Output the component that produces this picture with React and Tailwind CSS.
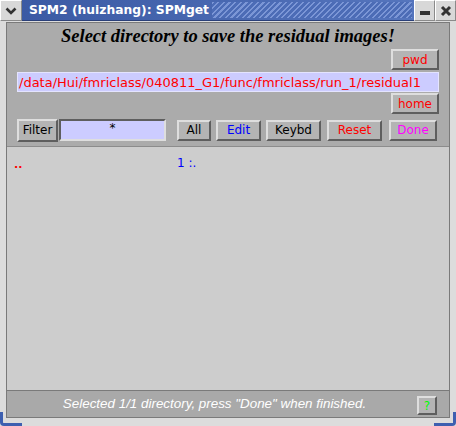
import React from "react";

const sans = { fontFamily: '"DejaVu Sans", "Liberation Sans", sans-serif' };

function Btn({ children, color = "text-black", className = "" }) {
  return (
    <div
      className={`flex items-center justify-center bg-[#b4b4b4] border-2 border-t-[#dedede] border-l-[#dedede] border-b-[#5e5e5e] border-r-[#5e5e5e] text-[12px] leading-none ${color} ${className}`}
      style={sans}
    >
      {children}
    </div>
  );
}

export default function App() {
  return (
    <div className="w-[456px] h-[426px] bg-[#dcdcdc] flex flex-col overflow-hidden" style={sans}>
      {/* title bar */}
      <div className="h-[21px] flex items-stretch shrink-0">
        <div className="w-[22px] bg-[#d8d8d8] border border-t-white border-l-white border-b-[#8a8a8a] border-r-[#8a8a8a] flex items-center justify-center">
          <svg width="12" height="8" viewBox="0 0 12 8">
            <path d="M1.5 1.5 L6 6 L10.5 1.5" stroke="#333" strokeWidth="2.6" fill="none" />
          </svg>
        </div>
        <div className="flex-1 flex items-center bg-[linear-gradient(90deg,#3b5aa4,#5575bd)] border-b border-[#2a3f78] pl-[7px] pr-[2px]">
          <span className="text-white font-bold text-[12.3px] leading-none whitespace-nowrap" style={{ fontFamily: '"DejaVu Sans", sans-serif' }}>
            SPM2 (huizhang): SPMget
          </span>
          <div className="flex-1 self-stretch ml-[3px] my-[2px] bg-[repeating-linear-gradient(135deg,#7b96d6_0px,#7b96d6_1.5px,#4c6cb6_1.5px,#4c6cb6_4px)]" />
        </div>
        <div className="w-[21px] bg-[#d8d8d8] border border-t-white border-l-white border-b-[#8a8a8a] border-r-[#8a8a8a] flex items-end justify-center pb-[5px]">
          <div className="w-[10px] h-[4px] bg-[#333]" />
        </div>
        <div className="w-[21px] bg-[#d8d8d8] border border-t-white border-l-white border-b-[#8a8a8a] border-r-[#8a8a8a] flex items-center justify-center">
          <svg width="12" height="12" viewBox="0 0 12 12">
            <path d="M2 2 L10 10 M10 2 L2 10" stroke="#333" strokeWidth="3" />
          </svg>
        </div>
      </div>

      {/* body */}
      <div className="flex-1 flex px-[6px] pt-[1px]">
        <div className="flex-1 flex flex-col border border-[#7a7a7a]">
          {/* top panel */}
          <div className="bg-[#ababab] h-[124px] flex flex-col px-[10px] border-b border-[#8c8c8c]">
            <div
              className="text-center text-black font-bold italic text-[18.5px] leading-none pt-[4px] h-[26px] whitespace-nowrap"
              style={{ fontFamily: '"Liberation Serif", serif' }}
            >
              Select directory to save the residual images!
            </div>
            <div className="flex justify-end">
              <Btn color="text-[#ff0000]" className="w-[48px] h-[21px]">pwd</Btn>
            </div>
            <div className="mt-[2px] h-[20px] bg-[#ccccff] border border-[#e4e4ff] flex items-center pl-[1px] text-[#ff0000] text-[13px] leading-none whitespace-nowrap overflow-hidden">
              /data/Hui/fmriclass/040811_G1/func/fmriclass/run_1/residual1
            </div>
            <div className="flex justify-end mt-[1px]">
              <Btn color="text-[#ff0000]" className="w-[48px] h-[21px]">home</Btn>
            </div>
            <div className="flex items-center mt-[5px] h-[22px]">
              <Btn className="w-[41px] h-[23px]">Filter</Btn>
              <div className="ml-[1px] w-[107px] h-[22px] bg-[#ccccff] border-2 border-t-[#5e5e5e] border-l-[#5e5e5e] border-b-[#dedede] border-r-[#dedede] flex justify-center pt-[1px] text-[12px] leading-none text-black">
                *
              </div>
              <Btn className="ml-[11px] w-[34px] h-[21px]">All</Btn>
              <Btn color="text-[#0000ff]" className="ml-[5px] w-[45px] h-[21px]">Edit</Btn>
              <Btn className="ml-[5px] w-[55px] h-[21px]">Keybd</Btn>
              <Btn color="text-[#ff0000]" className="ml-[6px] w-[55px] h-[21px]">Reset</Btn>
              <Btn color="text-[#ff00ff]" className="ml-[7px] w-[48px] h-[21px]">Done</Btn>
            </div>
          </div>
          {/* list area */}
          <div className="flex-1 bg-[#cdcdcd] relative">
            <span className="absolute left-[7px] top-[12px] text-[#ff0000] text-[11px] leading-none font-bold">..</span>
            <span className="absolute left-[170px] top-[10px] text-[#0000ff] text-[12px] leading-none">1 :.</span>
          </div>
          {/* status bar */}
          <div className="h-[27px] bg-[#a9a9a9] border-t border-[#7a7a7a] flex items-center relative">
            <div className="flex-1 text-center italic text-white text-[13.4px] leading-none pr-[27px] whitespace-nowrap" style={{ fontFamily: '"Liberation Sans", sans-serif' }}>
              Selected 1/1 directory, press "Done" when finished.
            </div>
            <div className="absolute right-[12px] top-[5px]">
              <Btn color="text-[#00ff00]" className="w-[20px] h-[19px] text-[11px]">?</Btn>
            </div>
          </div>
        </div>
      </div>

      {/* bottom frame */}
      <div className="h-[8px] shrink-0 flex items-end relative">
        <div className="absolute left-0 bottom-0 w-[22px] h-[14px] border-l-[3px] border-b-[3px] border-[#3d5fb0] rounded-bl-[4px]" />
        <div className="absolute right-0 bottom-0 w-[22px] h-[14px] border-r-[3px] border-b-[3px] border-[#3d5fb0] rounded-br-[4px]" />
      </div>
    </div>
  );
}
